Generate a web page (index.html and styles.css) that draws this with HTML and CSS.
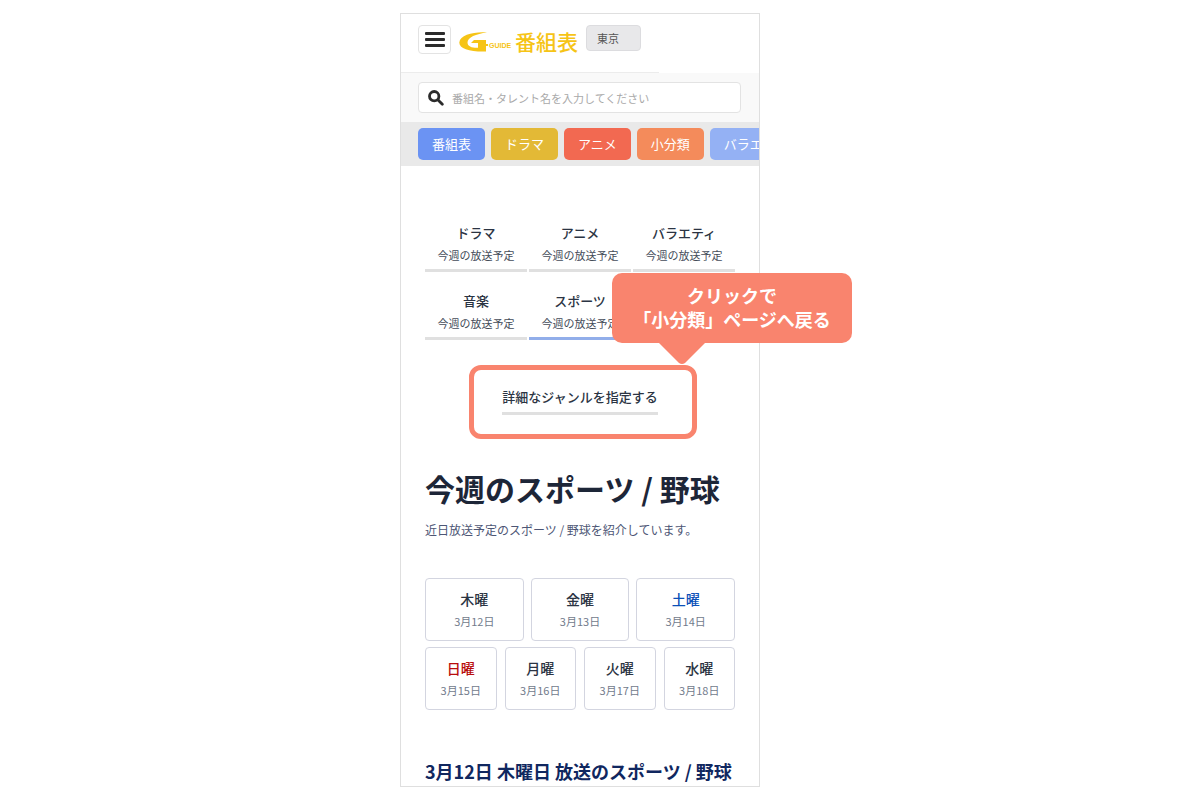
FILE: index.html
```html
<!DOCTYPE html>
<html lang="ja">
<head>
<meta charset="utf-8">
<meta name="viewport" content="width=device-width, initial-scale=1">
<title>今週のスポーツ / 野球</title>
<link rel="stylesheet" href="styles.css">
</head>
<body>
<main class="stage">
  <div class="phone">
    <header class="top">
      <button class="menu" type="button" aria-label="メニュー"><span></span><span></span><span></span></button>
      <a class="logo" href="#" aria-label="Gガイド 番組表">
        <svg class="logo-mark" width="30" height="22" viewBox="0 0 30 22" aria-hidden="true">
          <path d="M28 1.500C15 .5 1 4 .3 11.500C0 18 12 21 27 20.500V9H15L12 12H19V16.800C13 17 8.500 15.500 8.500 11.500C8.500 6.500 17 2.800 28 1.500Z"/>
          <path d="M27 13h2v2h-2z"/>
        </svg>
        <span class="logo-guide">GUIDE</span>
        <span class="logo-name">番組表</span>
      </a>
      <button class="region" type="button">東京</button>
    </header>
    <form class="search">
      <label class="search-box">
        <svg width="16" height="16" viewBox="0 0 16 16" aria-hidden="true"><circle cx="6.200" cy="6.200" r="4.700"/><path d="M9.800 9.800L14.300 14.300"/></svg>
        <input type="search" aria-label="番組検索" placeholder="番組名・タレント名を入力してください">
      </label>
    </form>
    <nav class="tabs">
      <a class="tab tab-blue" href="#">番組表</a>
      <a class="tab tab-gold" href="#">ドラマ</a>
      <a class="tab tab-red" href="#">アニメ</a>
      <a class="tab tab-orange" href="#">小分類</a>
      <a class="tab tab-sky" href="#">バラエティ</a>
    </nav>
    <div class="content">
      <nav class="genres">
        <a class="genre" href="#"><b>ドラマ</b><span>今週の放送予定</span></a>
        <a class="genre" href="#"><b>アニメ</b><span>今週の放送予定</span></a>
        <a class="genre" href="#"><b>バラエティ</b><span>今週の放送予定</span></a>
        <a class="genre" href="#"><b>音楽</b><span>今週の放送予定</span></a>
        <a class="genre genre-current" href="#"><b>スポーツ</b><span>今週の放送予定</span></a>
      </nav>
      <div class="detail">
        <a class="detail-link" href="#">詳細なジャンルを指定する</a>
        <div class="highlight"></div>
        <div class="callout">クリックで<br>「小分類」ページへ戻る
          <svg class="callout-tail" width="52" height="22" viewBox="0 0 52 22" aria-hidden="true"><path d="M3 0H49L29 20Q26 22 23 20Z"/></svg>
        </div>
      </div>
      <h1>今週のスポーツ / 野球</h1>
      <p class="lead">近日放送予定のスポーツ / 野球を紹介しています。</p>
      <div class="days">
        <a class="day" href="#"><b>木曜</b><span>3月12日</span></a>
        <a class="day" href="#"><b>金曜</b><span>3月13日</span></a>
        <a class="day day-sat" href="#"><b>土曜</b><span>3月14日</span></a>
      </div>
      <div class="days days-four">
        <a class="day day-sun" href="#"><b>日曜</b><span>3月15日</span></a>
        <a class="day" href="#"><b>月曜</b><span>3月16日</span></a>
        <a class="day" href="#"><b>火曜</b><span>3月17日</span></a>
        <a class="day" href="#"><b>水曜</b><span>3月18日</span></a>
      </div>
      <h2>3月12日 木曜日 放送のスポーツ / 野球</h2>
    </div>
  </div>
</main>
</body>
</html>
```
FILE: styles.css
```css
* { box-sizing: border-box; }
body {
  margin: 0;
  background: #fff;
  color: #2b3443;
  font-family: "Noto Sans CJK JP", sans-serif;
}
a { color: inherit; text-decoration: none; }
button, input { font: inherit; color: inherit; }

.stage {
  display: flex;
  justify-content: center;
  padding: 13px 40px 12px 0;
}
.phone {
  width: 100%;
  max-width: 360px;
  border: 1px solid #dfdfdf;
}

.top {
  position: relative;
  display: flex;
  align-items: flex-start;
  gap: 8px;
  padding: 11px 17px 19px;
}
.top::after {
  content: "";
  position: absolute;
  left: 0;
  bottom: 0;
  width: 72%;
  height: 1px;
  background: #ececec;
}
.menu {
  display: flex;
  flex-direction: column;
  align-items: center;
  justify-content: center;
  gap: 3px;
  width: 33px;
  height: 29px;
  padding: 0;
  border: 1px solid #e3e3e3;
  border-radius: 4px;
  background: #fff;
}
.menu span {
  width: 20px;
  height: 3px;
  border-radius: 1px;
  background: #2b2b2b;
}
.logo {
  display: flex;
  align-items: flex-end;
  height: 28px;
  color: #f6c416;
}
.logo-mark { fill: #f6c416; }
.logo-guide {
  width: 26px;
  font: bold 7px/14px "Liberation Sans", sans-serif;
}
.logo-name {
  font-size: 21px;
  font-weight: 500;
  line-height: 24px;
}
.region {
  width: 55px;
  height: 26px;
  padding: 0 0 0 10px;
  border: 1px solid #dcdcdf;
  border-radius: 4px;
  background: #e8e8ea;
  color: #555;
  font-size: 11px;
  line-height: 24px;
  text-align: left;
}

.search {
  padding: 9px 18px 9px 17px;
  background: #f9f9f9;
}
.search-box {
  display: flex;
  align-items: center;
  gap: 8px;
  height: 31px;
  padding: 0 9px;
  border: 1px solid #e3e3e3;
  border-radius: 4px;
  background: #fff;
}
.search-box svg {
  flex: none;
  fill: none;
  stroke: #2b2b2b;
  stroke-width: 2.800;
  stroke-linecap: round;
}
.search-box input {
  flex: 1;
  min-width: 0;
  padding: 0;
  border: 0;
  outline: 0;
  background: none;
  font-size: 11px;
}
.search-box input::placeholder { color: #a9a9a9; }

.tabs {
  display: flex;
  gap: 6px;
  padding: 6px 0 6px 17px;
  overflow: hidden;
  background: #e9e9e9;
}
.tab {
  flex: none;
  padding: 0 14px;
  border-radius: 5px;
  color: #fff;
  font-size: 13px;
  line-height: 32px;
}
.tab-blue { background: #6b93f3; }
.tab-gold { background: #e3b936; }
.tab-red { background: #f26951; }
.tab-orange { background: #f48b5b; }
.tab-sky { background: #94b1f4; }

.content { padding: 55px 24px 3px; }
.genres {
  display: grid;
  grid-template-columns: repeat(3, 1fr);
  gap: 17px 2px;
}
.genre {
  display: flex;
  flex-direction: column;
  align-items: center;
  padding-bottom: 4px;
  border-bottom: 3px solid #e0e0e0;
}
.genre b { font-size: 13px; font-weight: 500; line-height: 24px; }
.genre span { font-size: 11px; line-height: 20px; color: #444c59; }
.genre-current { border-color: #92aeea; }

.detail {
  position: relative;
  display: flex;
  justify-content: center;
  margin-top: 45px;
}
.detail-link {
  padding-bottom: 3px;
  border-bottom: 3px solid #e0e0e0;
  font-size: 13px;
  font-weight: 500;
  line-height: 24px;
}
.highlight {
  position: absolute;
  top: -20px;
  left: 44px;
  width: 228px;
  height: 74px;
  border: 5px solid #f9846e;
  border-radius: 12px;
  pointer-events: none;
}
.callout {
  position: absolute;
  top: -112px;
  left: 187px;
  width: 240px;
  padding: 10px 0 12px;
  border-radius: 10px;
  background: #f9846e;
  color: #fff;
  font-size: 18px;
  font-weight: 700;
  line-height: 24px;
  text-align: center;
  white-space: nowrap;
}
.callout-tail {
  position: absolute;
  top: 100%;
  left: 44px;
  fill: #f9846e;
}

h1 {
  margin: 51px 0 0;
  color: #1d2638;
  font-size: 30px;
  font-weight: 700;
  line-height: 44px;
  white-space: nowrap;
}
.lead {
  margin: 10px 0 38px;
  color: #4d5675;
  font-size: 12px;
  line-height: 20px;
}
.days {
  display: grid;
  grid-template-columns: repeat(3, 1fr);
  gap: 7px;
}
.days-four {
  grid-template-columns: repeat(4, 1fr);
  gap: 8px;
  margin-top: 6px;
}
.day {
  display: flex;
  flex-direction: column;
  align-items: center;
  padding: 8px 0 9px;
  border: 1px solid #d3d5e0;
  border-radius: 4px;
}
.day b { font-size: 14px; font-weight: 500; line-height: 24px; }
.day span { font-size: 11px; line-height: 20px; color: #727b8c; }
.day-sat b { color: #0b50b8; }
.day-sun b { color: #b80d0d; }

h2 {
  margin: 49px 0 0;
  color: #10275f;
  font-size: 18px;
  font-weight: 700;
  line-height: 24px;
  white-space: nowrap;
}
```
